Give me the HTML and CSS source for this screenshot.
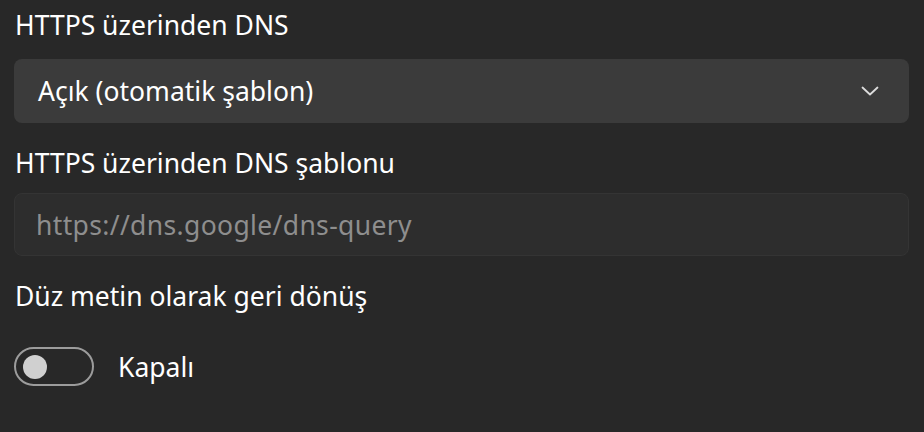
FILE: index.html
```html
<!DOCTYPE html>
<html lang="tr">
<head>
<meta charset="utf-8">
<title>DNS ayarları</title>
<link rel="stylesheet" href="styles.css">
</head>
<body>
<main class="panel">
  <div class="label label-first">HTTPS üzerinden DNS</div>
  <div class="select">
    <span class="select-text">Açık (otomatik şablon)</span>
    <svg class="chevron" width="18" height="10" viewBox="0 0 18 10" aria-hidden="true">
      <path d="M1.5 1.5 L9 8.5 L16.5 1.5" fill="none" stroke="#dcdcdc" stroke-width="1.8" stroke-linecap="round" stroke-linejoin="round"/>
    </svg>
  </div>
  <div class="label label-gap">HTTPS üzerinden DNS şablonu</div>
  <div class="input"><span class="placeholder">https://dns.google/dns-query</span></div>
  <div class="label label-gap">Düz metin olarak geri dönüş</div>
  <div class="toggle-row">
    <div class="toggle"><span class="knob"></span></div>
    <span class="toggle-text">Kapalı</span>
  </div>
</main>
</body>
</html>
```
FILE: styles.css
```css
html, body {
  margin: 0;
  padding: 0;
  background: #282828;
}
body {
  font-family: "Noto Sans", "Open Sans", sans-serif;
  color: #ffffff;
  font-size: 26.5px;
}
.panel {
  display: flex;
  flex-direction: column;
  padding: 6px 15px 0 14px;
}
.label {
  line-height: 38px;
  height: 38px;
  padding-left: 1px;
}
.label-gap {
  margin-top: 21px;
}
.select {
  margin-top: 15px;
  height: 64px;
  box-sizing: border-box;
  background: #3b3b3b;
  border-radius: 8px;
  display: flex;
  align-items: center;
  justify-content: space-between;
  padding: 0 30px 0 24px;
}
.select-text {
  line-height: 38px;
}
.chevron {
  display: block;
}
.input {
  margin-top: 11px;
  height: 63px;
  box-sizing: border-box;
  background: #2d2d2d;
  border: 1px solid #343434;
  border-radius: 8px;
  display: flex;
  align-items: center;
  padding: 0 21px;
}
.placeholder {
  color: #8e8e8e;
  line-height: 38px;
  letter-spacing: 0.35px;
}
.toggle-row {
  margin-top: 32px;
  display: flex;
  align-items: center;
  gap: 24px;
}
.toggle {
  width: 80px;
  height: 39px;
  box-sizing: border-box;
  border: 2px solid #9c9c9c;
  border-radius: 20px;
  display: flex;
  align-items: center;
  padding-left: 7px;
}
.knob {
  width: 24px;
  height: 24px;
  border-radius: 50%;
  background: #d0d0d0;
}
.toggle-text {
  line-height: 38px;
}
```
